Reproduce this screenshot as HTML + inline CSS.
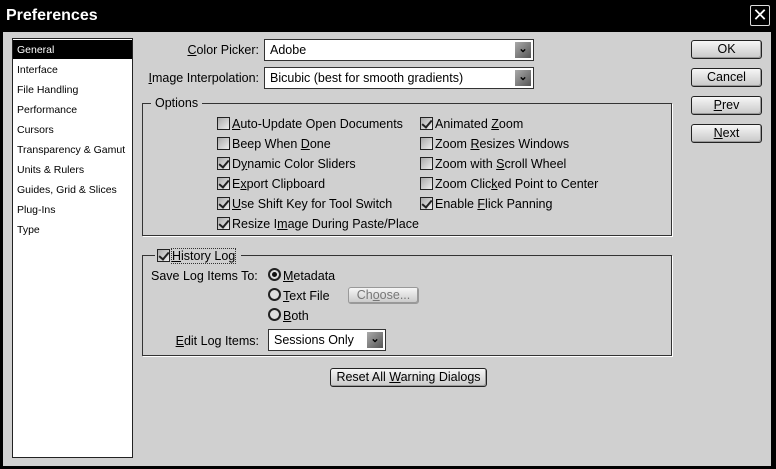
<!DOCTYPE html>
<html><head><style>
*{margin:0;padding:0;box-sizing:border-box}
body{width:776px;height:469px;background:#000;font-family:"Liberation Sans",sans-serif;font-size:12.5px;color:#000;position:relative;overflow:hidden}
.a{position:absolute;white-space:nowrap}
#win{position:absolute;left:3px;top:32px;width:768px;height:434px;background:#d0d0d0}
.cb{position:absolute;width:13px;height:13px;border:1px solid #222;background:linear-gradient(135deg,#aaa,#eee)}
.cb.on::after{content:"";position:absolute;left:3px;top:0px;width:4px;height:8px;border:solid #222;border-width:0 2px 2px 0;transform:rotate(40deg)}
.lbl{position:absolute;white-space:nowrap;line-height:14px}
.grp{position:absolute;border:1px solid #333;box-shadow:1px 1px 0 #fff}
.btn{position:absolute;border:1px solid #222;border-radius:3px;background:linear-gradient(#f6f6f6,#c8c8c8);text-align:center;line-height:17px;box-shadow:inset -1px -1px 0 #999}
.dd{position:absolute;background:#fff;border:1px solid #333;padding-left:5px;line-height:20px}
.dd i{position:absolute;right:2px;top:2px;width:16px;height:16px;background:linear-gradient(135deg,#aaa,#555);color:#000;font-style:normal;font-size:11px;font-weight:bold;text-align:center;line-height:14px}
.rd{position:absolute;width:13px;height:13px;border:2px solid #222;border-radius:50%;background:#ddd}
.rd.on::after{content:"";position:absolute;left:2px;top:2px;width:5px;height:5px;border-radius:50%;background:#111}
u{text-decoration:underline}
.li{position:absolute;left:17px;font-size:10.5px;white-space:nowrap}
</style></head><body>
<div class="a" style="left:6px;top:7px;color:#fff;font-weight:bold;font-size:16px">Preferences</div>
<div class="a" style="left:750px;top:5px;width:20px;height:21px;border:1px solid #ddd;border-radius:2px;color:#fff;font-size:18px;text-align:center;line-height:19px">✕</div>
<div id="win"></div>
<div class="a" style="left:12px;top:38px;width:121px;height:420px;background:#fff;border:1px solid #222"></div>
<div class="a" style="left:13px;top:40px;width:119px;height:19px;background:#000"></div>
<div class="li" style="top:44px;color:#fff">General</div>
<div class="li" style="top:64px">Interface</div>
<div class="li" style="top:84px">File Handling</div>
<div class="li" style="top:104px">Performance</div>
<div class="li" style="top:124px">Cursors</div>
<div class="li" style="top:144px">Transparency &amp; Gamut</div>
<div class="li" style="top:164px">Units &amp; Rulers</div>
<div class="li" style="top:184px">Guides, Grid &amp; Slices</div>
<div class="li" style="top:204px">Plug-Ins</div>
<div class="li" style="top:224px">Type</div>

<div class="lbl" style="right:517px;top:43px"><u>C</u>olor Picker:</div>
<div class="dd" style="left:264px;top:39px;width:270px;height:22px">Adobe<i>⌄</i></div>
<div class="lbl" style="right:517px;top:71px"><u>I</u>mage Interpolation:</div>
<div class="dd" style="left:264px;top:67px;width:270px;height:22px">Bicubic (best for smooth gradients)<i>⌄</i></div>

<div class="grp" style="left:142px;top:103px;width:530px;height:133px"></div>
<div class="lbl" style="left:151px;top:96px;background:#d0d0d0;padding:0 4px">Options</div>
<div class="cb" style="left:217px;top:117px"></div><div class="lbl" style="left:232px;top:117px"><u>A</u>uto-Update Open Documents</div>
<div class="cb" style="left:217px;top:137px"></div><div class="lbl" style="left:232px;top:137px">Beep When <u>D</u>one</div>
<div class="cb on" style="left:217px;top:157px"></div><div class="lbl" style="left:232px;top:157px">D<u>y</u>namic Color Sliders</div>
<div class="cb on" style="left:217px;top:177px"></div><div class="lbl" style="left:232px;top:177px">E<u>x</u>port Clipboard</div>
<div class="cb on" style="left:217px;top:197px"></div><div class="lbl" style="left:232px;top:197px"><u>U</u>se Shift Key for Tool Switch</div>
<div class="cb on" style="left:217px;top:217px"></div><div class="lbl" style="left:232px;top:217px">Resize I<u>m</u>age During Paste/Place</div>
<div class="cb on" style="left:420px;top:117px"></div><div class="lbl" style="left:435px;top:117px">Animated <u>Z</u>oom</div>
<div class="cb" style="left:420px;top:137px"></div><div class="lbl" style="left:435px;top:137px">Zoom <u>R</u>esizes Windows</div>
<div class="cb" style="left:420px;top:157px"></div><div class="lbl" style="left:435px;top:157px">Zoom with <u>S</u>croll Wheel</div>
<div class="cb" style="left:420px;top:177px"></div><div class="lbl" style="left:435px;top:177px">Zoom Clic<u>k</u>ed Point to Center</div>
<div class="cb on" style="left:420px;top:197px"></div><div class="lbl" style="left:435px;top:197px">Enable <u>F</u>lick Panning</div>

<div class="grp" style="left:142px;top:255px;width:530px;height:101px"></div>
<div class="a" style="left:155px;top:248px;width:86px;height:16px;background:#d0d0d0"></div>
<div class="cb on" style="left:157px;top:249px"></div><div class="lbl" style="left:172px;top:249px;outline:1px dotted #333"><u>H</u>istory Log</div>
<div class="lbl" style="left:151px;top:269px">Save Log Items To:</div>
<div class="rd on" style="left:268px;top:268px"></div><div class="lbl" style="left:283px;top:269px"><u>M</u>etadata</div>
<div class="rd" style="left:268px;top:288px"></div><div class="lbl" style="left:283px;top:289px"><u>T</u>ext File</div>
<div class="rd" style="left:268px;top:308px"></div><div class="lbl" style="left:283px;top:309px"><u>B</u>oth</div>
<div class="btn" style="left:348px;top:287px;width:71px;height:17px;color:#777;border-color:#999;line-height:15px">Ch<u>o</u>ose...</div>
<div class="lbl" style="right:517px;top:334px"><u>E</u>dit Log Items:</div>
<div class="dd" style="left:268px;top:329px;width:118px;height:22px">Sessions Only<i>⌄</i></div>

<div class="btn" style="left:330px;top:368px;width:157px;height:19px">Reset All <u>W</u>arning Dialogs</div>

<div class="btn" style="left:691px;top:40px;width:71px;height:19px">OK</div>
<div class="btn" style="left:691px;top:68px;width:71px;height:19px">Cancel</div>
<div class="btn" style="left:691px;top:96px;width:71px;height:19px"><u>P</u>rev</div>
<div class="btn" style="left:691px;top:124px;width:71px;height:19px"><u>N</u>ext</div>
</body></html>
